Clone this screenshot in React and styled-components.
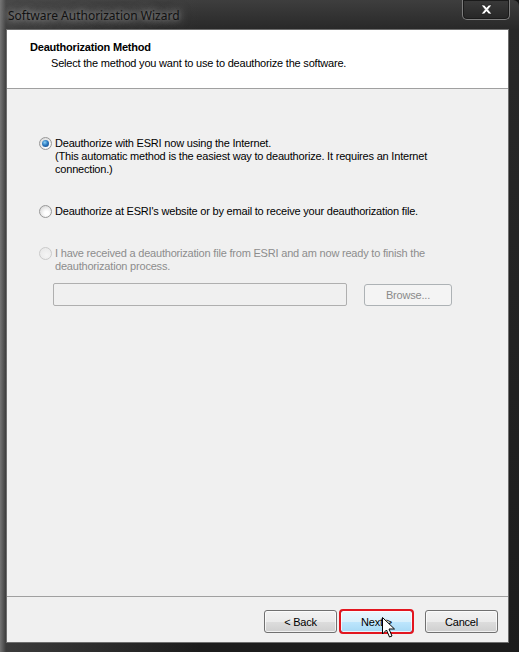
import React from 'react';
import styled, { createGlobalStyle } from 'styled-components';

const GlobalStyle = createGlobalStyle`
  body {
    margin: 0;
    background: #141414;
    overflow: hidden;
    font-family: "Liberation Sans", Arial, sans-serif;
  }
`;

const options = [
  {
    id: 'online',
    checked: true,
    lines: [
      'Deauthorize with ESRI now using the Internet.',
      '(This automatic method is the easiest way to deauthorize. It requires an Internet',
      'connection.)',
    ],
  },
  {
    id: 'email',
    lines: ["Deauthorize at ESRI's website or by email to receive your deauthorization file."],
  },
  {
    id: 'file',
    disabled: true,
    lines: [
      'I have received a deauthorization file from ESRI and am now ready to finish the',
      'deauthorization process.',
    ],
  },
];

const App = () => {
  return (
    <>
      <GlobalStyle />
      <Window>
        <TitleBar>
          <Caption>Software Authorization Wizard</Caption>
          <CloseButton>
            <svg width="13" height="11" viewBox="0 0 13 11">
              <path
                d="M1 1h3.4l2.1 2.4L8.6 1H12L8.3 5.5 12 10H8.6L6.5 7.6 4.4 10H1l3.7-4.5z"
                fill="#fff"
                stroke="#1e1e1e"
                strokeWidth="0.8"
              />
            </svg>
          </CloseButton>
        </TitleBar>

        <Client>
          <Header>
            <HeaderTitle>Deauthorization Method</HeaderTitle>
            <HeaderSub>Select the method you want to use to deauthorize the software.</HeaderSub>
          </Header>

          <Body>
            {options.map((opt) => (
              <Option key={opt.id} disabled={opt.disabled}>
                <Radio checked={opt.checked} disabled={opt.disabled} />
                <OptionText>
                  {opt.lines.map((l) => (
                    <div key={l}>{l}</div>
                  ))}
                </OptionText>
              </Option>
            ))}

            <FileRow>
              <FileInput />
              <SmallButton disabled>Browse...</SmallButton>
            </FileRow>
          </Body>

          <Footer>
            <WizButton>&lt; Back</WizButton>
            <WizButton hot>Next &gt;</WizButton>
            <WizButton cancel>Cancel</WizButton>
          </Footer>
        </Client>

        {/* mouse pointer over the Next button */}
        <Pointer width="13" height="21" viewBox="0 0 13 21">
          <path
            d="M0.5 0.5v16.5l4-4 3 7 2.5-1-3-7h5.5z"
            fill="#fff"
            stroke="#000"
            strokeWidth="1"
            strokeLinejoin="round"
          />
        </Pointer>
      </Window>
    </>
  );
};

export default App;

const Window = styled.div`
  position: relative;
  width: 519px;
  height: 652px;
  display: flex;
  flex-direction: column;
  background:
    linear-gradient(90deg, rgba(125, 125, 125, 0.9) 0px, rgba(80, 80, 80, 0.6) 6px, transparent 200px),
    linear-gradient(180deg, #3e3e3e 0px, #282828 30px, #1c1c1c 100%);
  border-top-right-radius: 6px;
`;

const TitleBar = styled.div`
  height: 29px;
  display: flex;
  justify-content: space-between;
  align-items: flex-start;
  padding-left: 8px;
  padding-right: 9px;
`;

const Caption = styled.div`
  margin-top: 8px;
  font-family: "Noto Sans", "Liberation Sans", sans-serif;
  font-size: 12px;
  line-height: 16px;
  color: #111;
  text-shadow: 0 0 6px rgba(190, 190, 190, 0.9), 0 0 12px rgba(170, 170, 170, 0.7);
`;

const CloseButton = styled.div`
  width: 46px;
  height: 19px;
  display: flex;
  align-items: center;
  justify-content: center;
  background: linear-gradient(180deg, #3a3a3a, #262626);
  border: 1px solid #7d7d7d;
  border-top: none;
  border-radius: 0 0 5px 5px;
  box-shadow: inset 0 0 0 1px #1a1a1a;
`;

const Client = styled.div`
  margin-left: 6px;
  width: 503px;
  height: 614px;
  box-sizing: border-box;
  border: 1px solid #6e6e6e;
  background: #f0f0f0;
  display: flex;
  flex-direction: column;
  font-size: 11px;
  line-height: 13px;
  letter-spacing: -0.2px;
  color: #000;
`;

const Header = styled.div`
  height: 59px;
  box-sizing: border-box;
  padding: 11px 0 0 23px;
  background: #fff;
  border-bottom: 1px solid #a0a0a0;
`;

const HeaderTitle = styled.div`
  font-weight: bold;
`;

const HeaderSub = styled.div`
  margin-top: 3px;
  padding-left: 21px;
`;

const Body = styled.div`
  flex: 1;
  padding: 48px 0 0 32px;
  display: flex;
  flex-direction: column;
  gap: 27px;
`;

const Option = styled.div`
  display: flex;
  align-items: flex-start;
  gap: 3px;
  color: ${(p) => (p.disabled ? '#8d8d8d' : '#000')};
  & + & {
    margin-top: ${(p) => (p.disabled ? '2px' : '0')};
  }
`;

const Radio = styled.span`
  position: relative;
  flex: none;
  width: 13px;
  height: 13px;
  box-sizing: border-box;
  border-radius: 50%;
  border: 1px solid ${(p) => (p.disabled ? '#cacaca' : '#989898')};
  background: ${(p) =>
    p.disabled
      ? 'radial-gradient(circle at 60% 65%, #f4f4f4, #e6e6e6)'
      : 'radial-gradient(circle at 60% 65%, #ffffff 20%, #d4d4d4 90%)'};
  &::after {
    content: '';
    display: ${(p) => (p.checked ? 'block' : 'none')};
    position: absolute;
    left: 2px;
    top: 2px;
    width: 7px;
    height: 7px;
    border-radius: 50%;
    background: radial-gradient(circle at 40% 35%, #8ad1f6 0%, #2c7ac0 45%, #153d79 100%);
  }
`;

const OptionText = styled.div`
  white-space: nowrap;
`;

const FileRow = styled.div`
  margin-top: -17px;
  margin-left: 14px;
  display: flex;
  align-items: flex-start;
  gap: 17px;
`;

const FileInput = styled.div`
  width: 294px;
  height: 23px;
  box-sizing: border-box;
  border: 1px solid #afafaf;
  border-radius: 2px;
  background: #f0f0f0;
`;

const SmallButton = styled.button`
  width: 88px;
  height: 22px;
  margin-top: 1px;
  padding: 0;
  box-sizing: border-box;
  font-family: inherit;
  font-size: 11px;
  letter-spacing: -0.2px;
  color: #8a8a8a;
  background: #f4f4f4;
  border: 1px solid #adb2b5;
  border-radius: 3px;
`;

const Footer = styled.div`
  height: 46px;
  box-sizing: border-box;
  border-top: 1px solid #a0a0a0;
  padding: 13px 10px 0 0;
  display: flex;
  justify-content: flex-end;
  gap: 3px;
`;

const WizButton = styled.button`
  width: 73px;
  height: 23px;
  padding: 0;
  box-sizing: border-box;
  margin-left: ${(p) => (p.cancel ? '9px' : '0')};
  font-family: inherit;
  font-size: 11px;
  letter-spacing: -0.2px;
  color: #000;
  border-radius: 3px;
  border: 1px solid ${(p) => (p.hot ? '#3c7fb1' : '#707070')};
  background: ${(p) =>
    p.hot
      ? 'linear-gradient(180deg, #eaf6fd 0%, #d9f0fc 50%, #bee6fd 51%, #a7d9f5 100%)'
      : 'linear-gradient(180deg, #f2f2f2 0%, #ebebeb 50%, #dddddd 51%, #cfcfcf 100%)'};
  box-shadow: inset 0 0 0 1px rgba(255, 255, 255, 0.7);
  outline: ${(p) => (p.hot ? '2px solid #e3161f' : 'none')};
  outline-offset: -1px;
`;

const Pointer = styled.svg`
  position: absolute;
  left: 382px;
  top: 617px;
`;
